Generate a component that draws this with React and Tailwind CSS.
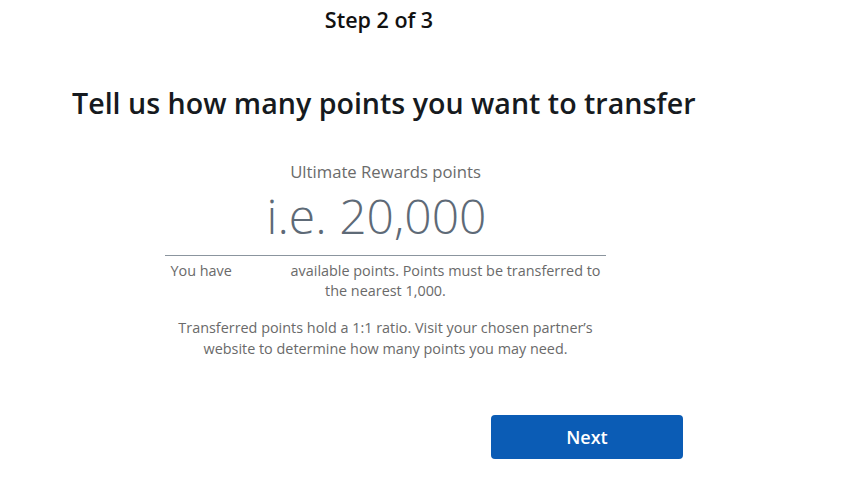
export default function App() {
  return (
    <div className="h-[484px] w-[855px] overflow-hidden bg-white font-['Open_Sans',sans-serif]">
      <div className="w-[758px] pt-[8px] text-center text-[21.5px] font-semibold leading-[24px] text-[#111]">
        Step 2 of 3
      </div>

      <h1 className="ml-[72px] mt-[54px] text-[28.6px] font-semibold leading-[34px] text-[#161a20]">
        Tell us how many points you want to transfer
      </h1>

      <div className="ml-[165px] w-[441px] text-center">
        <div className="mt-[41px] text-[16.7px] leading-[22px] text-[#6b6b6b]">Ultimate Rewards points</div>
        <div className="mt-[5px] border-b border-[#8b959e] pb-[11px] pr-[18px] text-[48px] font-light leading-[56px] text-[#5e6a77]">
          i.e. 20,000
        </div>
        <p className="mt-[5px] text-[14.4px] leading-[20px] text-[#6a6a6a]">
          You have<span className="inline-block w-[55px]"></span> available points. Points must be transferred to the nearest 1,000.
        </p>
        <p className="mt-[16px] text-[14.4px] leading-[21px] text-[#6a6a6a]">
          Transferred points hold a 1:1 ratio. Visit your chosen partner’s website to determine how many points you may need.
        </p>
      </div>

      <button className="ml-[491px] mt-[56px] flex h-[44px] w-[192px] items-center justify-center rounded-[4px] bg-[#0b5cb5] text-[18px] font-semibold text-white">
        Next
      </button>
    </div>
  );
}
